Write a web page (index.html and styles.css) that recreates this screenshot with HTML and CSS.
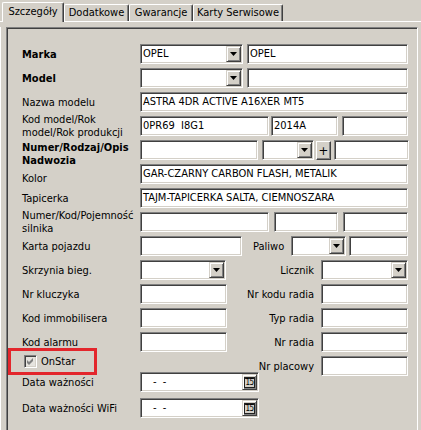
FILE: index.html
```html
<!DOCTYPE html>
<html lang="pl">
<head>
<meta charset="utf-8">
<title>Szczegóły</title>
<link rel="stylesheet" href="styles.css">
</head>
<body>
<div class="tabs">
  <div class="tab active t1">Szczegóły</div>
  <div class="tab t2">Dodatkowe</div>
  <div class="tab t3">Gwarancje</div>
  <div class="tab t4">Karty Serwisowe</div>
</div>
<div class="page">
  <div class="panel">
    <div class="row">
      <div class="lbl b">Marka</div>
      <div class="f combo w103"><span>OPEL</span><span class="arrow"><svg width="7" height="4" viewBox="0 0 7 4"><path d="M0 0h7L3.5 4z"/></svg></span></div>
      <div class="f w161 ml4">OPEL</div>
    </div>
    <div class="row">
      <div class="lbl b">Model</div>
      <div class="f combo w103"><span></span><span class="arrow"><svg width="7" height="4" viewBox="0 0 7 4"><path d="M0 0h7L3.5 4z"/></svg></span></div>
      <div class="f w161 ml4"></div>
    </div>
    <div class="row">
      <div class="lbl">Nazwa modelu</div>
      <div class="f w268">ASTRA 4DR ACTIVE A16XER MT5</div>
    </div>
    <div class="row">
      <div class="lbl">Kod model/Rok model/Rok produkcji</div>
      <div class="f w129">0PR69&nbsp; I8G1</div>
      <div class="f w67 ml2">2014A</div>
      <div class="f w66 ml4"></div>
    </div>
    <div class="row">
      <div class="lbl b low">Numer/Rodzaj/Opis Nadwozia</div>
      <div class="f w118"></div>
      <div class="f combo w52 ml4"><span></span><span class="arrow"><svg width="7" height="4" viewBox="0 0 7 4"><path d="M0 0h7L3.5 4z"/></svg></span></div>
      <div class="btn ml2">+</div>
      <div class="f w75 ml3"></div>
    </div>
    <div class="row">
      <div class="lbl low">Kolor</div>
      <div class="f w268">GAR-CZARNY CARBON FLASH, METALIK</div>
    </div>
    <div class="row">
      <div class="lbl">Tapicerka</div>
      <div class="f w268">TAJM-TAPICERKA SALTA, CIEMNOSZARA</div>
    </div>
    <div class="row">
      <div class="lbl">Numer/Kod/Pojemność silnika</div>
      <div class="f w129"></div>
      <div class="f w64 ml5"></div>
      <div class="f w65 ml5"></div>
    </div>
    <div class="row">
      <div class="lbl">Karta pojazdu</div>
      <div class="f w102"></div>
      <div class="lbl-in">Paliwo</div>
      <div class="f combo w55"><span></span><span class="arrow"><svg width="7" height="4" viewBox="0 0 7 4"><path d="M0 0h7L3.5 4z"/></svg></span></div>
      <div class="f w59 ml3"></div>
    </div>
    <div class="cols">
      <div class="col-left">
        <div class="row">
          <div class="lbl">Skrzynia bieg.</div>
          <div class="f combo w86"><span></span><span class="arrow"><svg width="7" height="4" viewBox="0 0 7 4"><path d="M0 0h7L3.5 4z"/></svg></span></div>
        </div>
        <div class="row">
          <div class="lbl">Nr kluczyka</div>
          <div class="f w87"></div>
        </div>
        <div class="row">
          <div class="lbl">Kod immobilisera</div>
          <div class="f w87"></div>
        </div>
        <div class="row">
          <div class="lbl">Kod alarmu</div>
          <div class="f w87"></div>
        </div>
        <div class="mark">
          <span class="chk"><svg width="7" height="7" viewBox="0 0 7 7"><path d="M0 2l2 2 4-4v3l-4 4-2-2z"/></svg></span>
          <span class="chk-lbl">OnStar</span>
        </div>
        <div class="row r-date1">
          <div class="lbl">Data ważności</div>
          <div class="f date w119"><span class="mask">-&nbsp;&nbsp;-</span><span class="calbtn"><span class="cal">15</span></span></div>
        </div>
        <div class="row">
          <div class="lbl">Data ważności WiFi</div>
          <div class="f date w119"><span class="mask">-&nbsp;&nbsp;-</span><span class="calbtn"><span class="cal">15</span></span></div>
        </div>
      </div>
      <div class="col-right">
        <div class="row">
          <div class="lbl-r">Licznik</div>
          <div class="f combo w87"><span></span><span class="arrow"><svg width="7" height="4" viewBox="0 0 7 4"><path d="M0 0h7L3.5 4z"/></svg></span></div>
        </div>
        <div class="row">
          <div class="lbl-r">Nr kodu radia</div>
          <div class="f w87"></div>
        </div>
        <div class="row">
          <div class="lbl-r">Typ radia</div>
          <div class="f w87"></div>
        </div>
        <div class="row">
          <div class="lbl-r">Nr radia</div>
          <div class="f w87"></div>
        </div>
        <div class="row">
          <div class="lbl-r">Nr placowy</div>
          <div class="f w87"></div>
        </div>
      </div>
    </div>
  </div>
</div>
</body>
</html>
```

FILE: styles.css
```css
* { box-sizing: border-box; }

html, body {
  margin: 0;
  padding: 0;
}

body {
  width: 421px;
  height: 430px;
  overflow: hidden;
  background: #d4d0c8;
  color: #000;
  font-family: "DejaVu Sans Condensed", "DejaVu Sans", sans-serif;
  font-size: 11px;
}

/* tabs */
.tabs {
  display: flex;
  align-items: flex-end;
  height: 22px;
  padding-left: 2px;
  border-bottom: 1px solid #fff;
}

.tab {
  height: 17px;
  line-height: 15px;
  text-align: center;
  white-space: nowrap;
  border: 1px solid #fff;
  border-bottom: none;
  border-right-color: #404040;
  border-radius: 2px 2px 0 0;
  box-shadow: inset -1px 0 0 #808080;
  background: #d4d0c8;
}

.tab.active {
  height: 20px;
  line-height: 18px;
  margin-bottom: -1px;
  position: relative;
  z-index: 1;
}

.t1 { width: 62px; }
.t2 { width: 65px; }
.t3 { width: 64px; }
.t4 { width: 90px; }

/* page */
.page {
  border-left: 1px solid #fff;
  height: 408px;
}

.panel {
  margin: 5px 3px 0 5px;
  height: 420px;
  padding: 16px 0 0 15px;
  border-top: 1px solid #808080;
  border-left: 1px solid #808080;
  border-right: 1px solid #fff;
  box-shadow: inset 1px 1px 0 #404040;
}

.row {
  display: flex;
  align-items: center;
  height: 20px;
  margin-bottom: 4px;
}

.lbl {
  width: 118px;
  flex: none;
  line-height: 13px;
}

.lbl.low { margin-top: 8px; }

.b { font-weight: bold; }

.lbl-in {
  flex: none;
  width: 49px;
  padding-left: 11px;
}

/* fields */
.f {
  flex: none;
  height: 20px;
  padding: 0 2px;
  line-height: 18px;
  white-space: nowrap;
  overflow: hidden;
  background: #fff;
  border: 1px solid;
  border-color: #808080 #fff #fff #808080;
  box-shadow: inset 1px 1px 0 #404040, inset -1px -1px 0 #d4d0c8;
}

.combo, .date {
  display: flex;
  align-items: center;
  padding-right: 1px;
}

.arrow, .calbtn {
  margin-left: auto;
  flex: none;
  width: 15px;
  height: 16px;
  display: flex;
  align-items: center;
  justify-content: center;
  background: #d4d0c8;
  border: 1px solid;
  border-color: #d4d0c8 #404040 #404040 #d4d0c8;
  box-shadow: inset 1px 1px 0 #fff, inset -1px -1px 0 #808080;
}

.arrow svg { display: block; fill: #000; }

.btn {
  flex: none;
  width: 15px;
  height: 19px;
  display: flex;
  align-items: center;
  justify-content: center;
  font-size: 13px;
  background: #d4d0c8;
  border: 1px solid;
  border-color: #fff #404040 #404040 #fff;
  box-shadow: inset -1px -1px 0 #808080;
}

.mask {
  padding-left: 10px;
  color: #000;
}

.cal {
  display: block;
  width: 11px;
  height: 11px;
  border: 1px solid #202020;
  border-top-width: 2px;
  font-size: 8px;
  line-height: 8px;
  text-align: center;
  letter-spacing: -0.5px;
  color: #000;
  font-family: "DejaVu Sans Condensed", sans-serif;
}

.w52 { width: 52px; }
.w55 { width: 55px; }
.w59 { width: 59px; }
.w64 { width: 64px; }
.w65 { width: 65px; }
.w66 { width: 66px; }
.w67 { width: 67px; }
.w75 { width: 75px; }
.w86 { width: 86px; }
.w87 { width: 87px; }
.w102 { width: 102px; }
.w103 { width: 103px; }
.w118 { width: 118px; }
.w119 { width: 119px; }
.w129 { width: 129px; }
.w161 { width: 161px; }
.w268 { width: 268px; }

.ml2 { margin-left: 2px; }
.ml3 { margin-left: 3px; }
.ml4 { margin-left: 4px; }
.ml5 { margin-left: 5px; }

/* lower two columns */
.cols { display: flex; }

.col-left {
  width: 206px;
  flex: none;
}

.col-right {
  width: 180px;
  flex: none;
}

.lbl-r {
  flex: 1;
  text-align: right;
  padding-right: 7px;
  white-space: nowrap;
}

.mark {
  display: flex;
  align-items: center;
  width: 89px;
  height: 27px;
  margin: -8px 0 -3px -14px;
  padding-left: 13px;
  border: 3px solid #e3262c;
}

.chk {
  width: 13px;
  height: 13px;
  flex: none;
  display: flex;
  align-items: center;
  justify-content: center;
  background: #e6e4df;
  border: 1px solid;
  border-color: #808080 #fff #fff #808080;
  box-shadow: inset 1px 1px 0 #404040, inset -1px -1px 0 #d4d0c8;
}

.chk svg { display: block; fill: #808080; }

.chk-lbl { margin-left: 4px; }

.r-date1 { margin-bottom: 6px; }
```
